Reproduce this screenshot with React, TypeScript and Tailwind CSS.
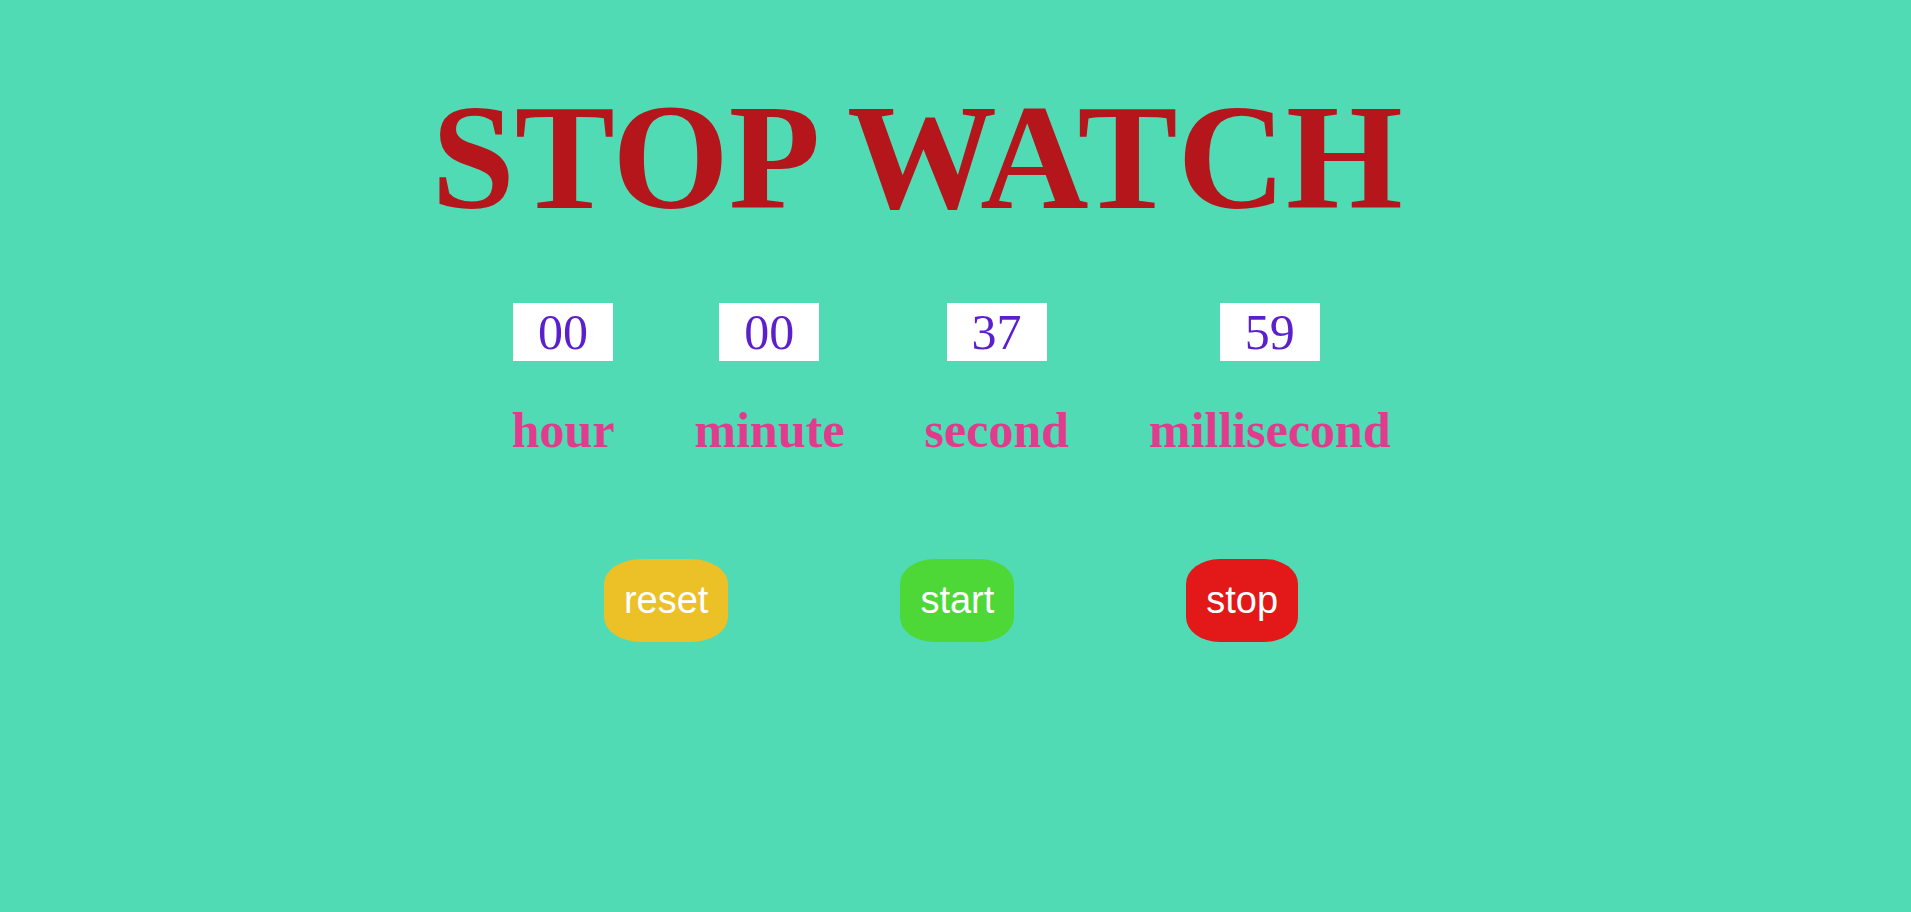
import { useEffect, useState } from 'react';

const pad = (value: number) => String(value).padStart(2, '0');

function Unit({ name, value }: { name: string; value: number }) {
  return (
    <div className="flex flex-col items-center gap-11">
      <output
        aria-labelledby={name}
        className="block bg-white px-[25px] text-[50px] leading-[58px] text-[#5b1fcb]"
      >
        {pad(value)}
      </output>
      <span id={name} className="text-[50px] leading-none font-bold text-[#e23a8c]">
        {name}
      </span>
    </div>
  );
}

const buttonBase =
  'cursor-pointer rounded-[30%] p-5 font-["Liberation_Sans",Arial,sans-serif] text-[38px] leading-[43px] text-white';

export default function App() {
  // Elapsed time in hundredths of a second
  const [elapsed, setElapsed] = useState(3759);
  const [running, setRunning] = useState(false);

  useEffect(() => {
    if (!running) return;
    const timer = setInterval(() => setElapsed((t) => t + 1), 10);
    return () => clearInterval(timer);
  }, [running]);

  const reset = () => {
    setRunning(false);
    setElapsed(0);
  };

  return (
    <main className='flex min-h-screen flex-col items-center bg-[#51dbb5] pt-[82px] pr-[9px] font-["Liberation_Serif","Times_New_Roman",serif]'>
      <h1 className="pr-[68px] text-[150px] leading-none font-bold text-[#b4161b]">STOP WATCH</h1>
      <section className="mt-[71px] flex gap-20">
        <Unit name="hour" value={Math.floor(elapsed / 360000)} />
        <Unit name="minute" value={Math.floor(elapsed / 6000) % 60} />
        <Unit name="second" value={Math.floor(elapsed / 100) % 60} />
        <Unit name="millisecond" value={elapsed % 100} />
      </section>
      <div className="mt-[104px] flex gap-[172px]">
        <button type="button" onClick={reset} className={`${buttonBase} bg-[#ecc027]`}>
          reset
        </button>
        <button type="button" onClick={() => setRunning(true)} className={`${buttonBase} bg-[#4dd837]`}>
          start
        </button>
        <button type="button" onClick={() => setRunning(false)} className={`${buttonBase} bg-[#e31818]`}>
          stop
        </button>
      </div>
    </main>
  );
}
